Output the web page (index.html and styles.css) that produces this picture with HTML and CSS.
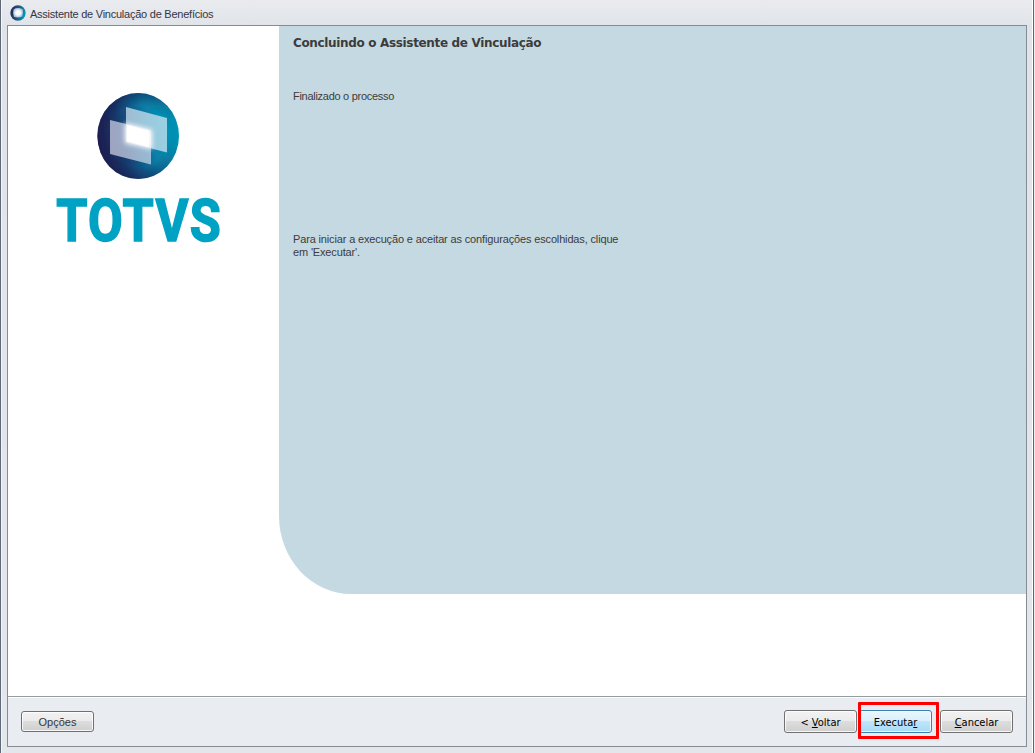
FILE: index.html
```
<!DOCTYPE html>
<html lang="pt-BR">
<head>
<meta charset="utf-8">
<title>Assistente de Vinculação de Benefícios</title>
<link rel="stylesheet" href="styles.css">
</head>
<body>
<div class="window">
  <header class="titlebar">
    <svg class="app-icon" viewBox="0 0 16 16">
      <defs>
        <linearGradient id="ring" x1="0" y1=".4" x2="1" y2=".6"><stop offset="0" stop-color="#232952"/><stop offset=".45" stop-color="#23507e"/><stop offset="1" stop-color="#009fc1"/></linearGradient>
        <radialGradient id="core"><stop offset="0" stop-color="#fff"/><stop offset=".5" stop-color="#f4f8fb"/><stop offset="1" stop-color="#a5bdd0"/></radialGradient>
      </defs>
      <circle cx="8" cy="8" r="7.7" fill="url(#ring)"/>
      <path d="M5.5 3.2Q10 2.6 12.8 4.5Q13.4 8 12.2 11.5Q8 13.4 3.8 11.8Q2.6 8 3.6 4.6Z" fill="url(#core)"/>
    </svg>
    <span class="caption">Assistente de Vinculação de Benefícios</span>
  </header>
  <main class="frame">
    <div class="page">
      <aside class="brand">
        <svg class="logo" width="184" height="180" viewBox="48 88 184 180">
          <defs>
            <linearGradient id="ball" x1="0" y1=".65" x2="1" y2=".42"><stop offset="0" stop-color="#211b4c"/><stop offset=".3" stop-color="#17396c"/><stop offset=".65" stop-color="#087ca5"/><stop offset="1" stop-color="#00a4c3"/></linearGradient>
            <radialGradient id="edge"><stop offset=".72" stop-color="#192052" stop-opacity="0"/><stop offset="1" stop-color="#192052" stop-opacity=".7"/></radialGradient>
            <linearGradient id="fade" x1="0" y1="0" x2="1" y2="0"><stop offset="0" stop-color="#fff"/><stop offset=".65" stop-color="#fff" stop-opacity=".7"/><stop offset="1" stop-color="#fff" stop-opacity="0"/></linearGradient>
            <mask id="leftside"><rect x="90" y="88" width="96" height="96" fill="url(#fade)"/></mask>
            <filter id="soft" x="-40%" y="-40%" width="180%" height="180%"><feGaussianBlur stdDeviation="2.4"/></filter>
            <filter id="smooth" x="-5%" y="-5%" width="110%" height="110%"><feGaussianBlur stdDeviation=".6"/></filter>
          </defs>
          <g filter="url(#smooth)">
            <ellipse cx="138.2" cy="136" rx="40.8" ry="43" fill="url(#ball)"/>
            <ellipse cx="138.2" cy="136" rx="40.8" ry="43" fill="url(#edge)" mask="url(#leftside)"/>
            <path d="M126 107L167 118V152.5L126 142Z" fill="#e1edf7" opacity=".68"/>
            <path d="M110 120L151 130V164.5L110 154Z" fill="#dce0f0" opacity=".67"/>
            <path d="M125 123L152 130V149L125 143Z" fill="#fff" filter="url(#soft)"/>
            <path d="M127 125L149 131V147L127 141Z" fill="#fff"/>
          </g>
          <g class="wordmark" filter="url(#smooth)">
            <text transform="translate(56.2 241) scale(.84 1)">TOTVS</text>
          </g>
        </svg>
      </aside>
      <section class="content">
        <h1>Concluindo o Assistente de Vinculação</h1>
        <p class="status">Finalizado o processo</p>
        <p class="hint">Para iniciar a execução e aceitar as configurações escolhidas, clique<br>em 'Executar'.</p>
      </section>
    </div>
    <footer class="actions">
      <button class="btn options">Opções</button>
      <div class="nav">
        <button class="btn">&lt; <u>V</u>oltar</button>
        <div class="marked"><button class="btn primary">Executa<u>r</u></button><span class="highlight"></span></div>
        <button class="btn"><u>C</u>ancelar</button>
      </div>
    </footer>
  </main>
</div>
</body>
</html>
```
FILE: styles.css
```
* { box-sizing: border-box; }
html, body { margin: 0; height: 100%; overflow: hidden; }
body { background: #edf0f2; }
.window {
  width: 1034px; height: 753px;
  padding: 0 6px 6px;
  border-left: 1px solid #5e6876;
  border-right: 1px solid #566675;
  background: linear-gradient(#e9ebef, #e0e4e8 26px, #e3e6ea);
  box-shadow: inset -1px 0 #fff, inset 1px 0 #f4f6f8;
  font-family: "Liberation Sans", sans-serif;
  font-size: 11px;
  color: #3c3c3c;
}
.titlebar { height: 25px; display: flex; align-items: flex-start; padding: 5px 0 0 3px; gap: 4px; }
.app-icon { width: 16px; height: 16px; flex: none; }
.caption { line-height: 13px; padding-top: 3px; color: #353543; white-space: nowrap; letter-spacing: -.24px; }
.frame { width: 1020px; height: 722px; border: 1px solid #858c94; display: flex; flex-direction: column; background: #e9ecf1; }
.page { height: 671px; flex: none; display: flex; align-items: flex-start; background: #fff; border-bottom: 1px solid #969b9f; }
.brand { width: 271px; padding: 62px 0 0 40px; flex: none; }
.logo { display: block; overflow: visible; }
.wordmark { font: bold 60px Roboto, sans-serif; letter-spacing: 1.6px; fill: #00a2c3; stroke: #00a2c3; stroke-width: 1.6px; }
.content { flex: 1; height: 568px; background: #c5d9e2; border-bottom-left-radius: 72px 78px; padding: 10px 0 0 14px; }
h1 { margin: 0; font: bold 12px/14px "DejaVu Sans", sans-serif; letter-spacing: -.34px; white-space: nowrap; }
.status { margin: 40px 0 0; line-height: 13px; letter-spacing: -.28px; }
.hint { margin: 130px 0 0; line-height: 13px; letter-spacing: -.15px; }
.actions { flex: 1; display: flex; justify-content: space-between; align-items: flex-start; padding: 13px 13px 0; box-shadow: inset 0 1px #fff; }
.nav { display: flex; gap: 2px; }
.btn {
  width: 73px; height: 23px; padding: 1px 0 0; display: block;
  border: 1px solid #707070; border-radius: 3px;
  box-shadow: inset 0 0 0 1px rgba(255,255,255,.8);
  background: linear-gradient(#f2f2f2, #ebebeb 48%, #dddddd 50%, #cfcfcf);
  font: 11px/13px "DejaVu Sans Condensed", "DejaVu Sans", sans-serif; letter-spacing: 0; color: #000;
}
.options { height: 21px; margin-top: 1px; font-family: "Liberation Sans", sans-serif; color: #353535; }
.primary { border-color: #3c7fb1; background: linear-gradient(#eaf6fd, #d9f0fc 48%, #bee6fd 50%, #a7d9f5); }
.marked { position: relative; margin-right: 6px; }
.highlight { position: absolute; left: -1px; top: -8px; width: 81px; height: 37px; border: 3px solid #f00; border-radius: 1px; }
```
